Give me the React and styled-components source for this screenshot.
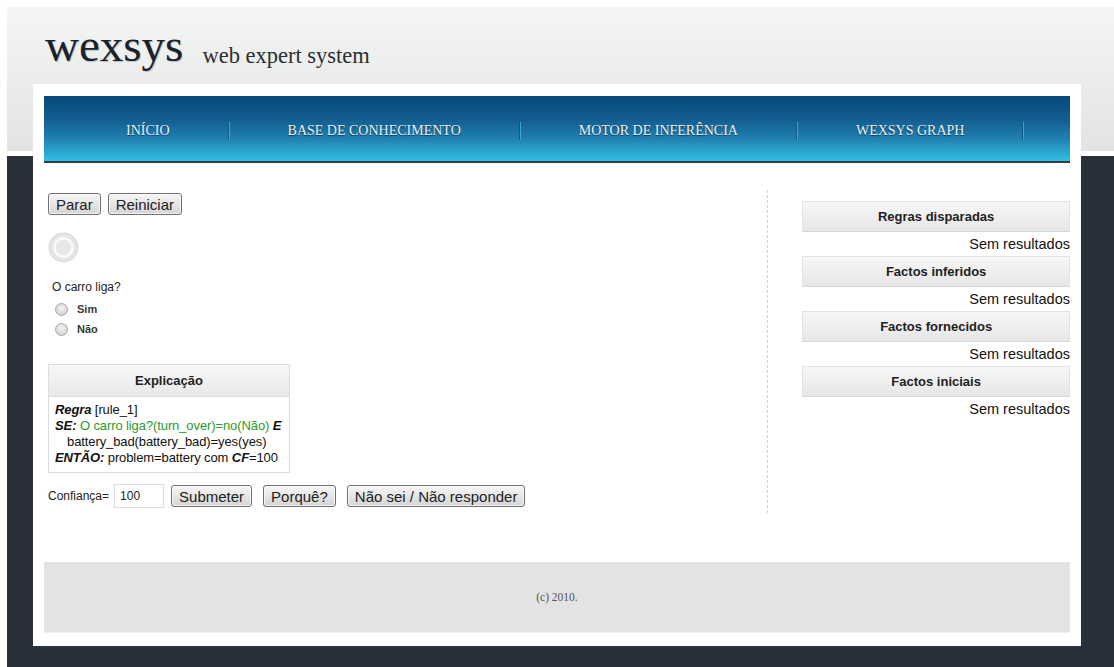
import React from "react";
import styled, { createGlobalStyle } from "styled-components";

const GlobalStyle = createGlobalStyle`
   html, body {
      margin: 0;
      padding: 0;
      background: #fff;
   }
   body {
      padding: 7px 0 0 7px;
      font-family: "Liberation Sans", Arial, sans-serif;
      color: #222;
   }
`;

const navItems = ["Início", "Base de Conhecimento", "Motor de Inferência", "Wexsys Graph"];
const panels = ["Regras disparadas", "Factos inferidos", "Factos fornecidos", "Factos iniciais"];

function Spinner() {
   return (
      <svg width="31" height="31" viewBox="0 0 31 31">
         <defs>
            <radialGradient id="spinOuter" cx="50%" cy="50%" r="50%">
               <stop offset="0%" stopColor="#f2f2f2" />
               <stop offset="80%" stopColor="#e6e6e6" />
               <stop offset="100%" stopColor="#dadada" />
            </radialGradient>
         </defs>
         <circle cx="15.5" cy="15.5" r="15" fill="url(#spinOuter)" />
         <circle cx="15.5" cy="15.5" r="9" fill="#e8e8e8" stroke="#fbfbfb" strokeWidth="2.5" />
      </svg>
   );
}

function App() {
   return (
      <>
         <GlobalStyle />
         <Page>
            <Header>
               <Logo>wexsys</Logo>
               <Tagline>web expert system</Tagline>
            </Header>
            <Container>
               <Nav>
                  {navItems.map((item) => (
                     <React.Fragment key={item}>
                        <NavItem>{item}</NavItem>
                        <NavSep />
                     </React.Fragment>
                  ))}
               </Nav>

               <Main>
                  <LeftCol>
                     <ButtonRow>
                        <Button>Parar</Button>
                        <Button>Reiniciar</Button>
                     </ButtonRow>
                     <SpinnerWrap>
                        <Spinner />
                     </SpinnerWrap>
                     <Question>O carro liga?</Question>
                     <Options>
                        <Option>
                           <Radio />
                           Sim
                        </Option>
                        <Option>
                           <Radio />
                           Não
                        </Option>
                     </Options>

                     <ExplainBox>
                        <BoxHead>Explicação</BoxHead>
                        <ExplainBody>
                           <div>
                              <Key>Regra</Key> [rule_1]
                           </div>
                           <div>
                              <Key>SE:</Key> <Cond>O carro liga?(turn_over)=no(Não)</Cond> <Key>E</Key>
                           </div>
                           <Indent>battery_bad(battery_bad)=yes(yes)</Indent>
                           <div>
                              <Key>ENTÃO:</Key> problem=battery com <Key>CF</Key>=100
                           </div>
                        </ExplainBody>
                     </ExplainBox>

                     <AnswerRow>
                        <Label>Confiança=</Label>
                        <Input defaultValue="100" />
                        <Button $gap={0}>Submeter</Button>
                        <Button $gap={4}>Porquê?</Button>
                        <Button $gap={4}>Não sei / Não responder</Button>
                     </AnswerRow>
                  </LeftCol>

                  <RightCol>
                     {panels.map((title) => (
                        <Panel key={title}>
                           <PanelHead>{title}</PanelHead>
                           <Empty>Sem resultados</Empty>
                        </Panel>
                     ))}
                  </RightCol>
               </Main>

               <Footer>(c) 2010.</Footer>
            </Container>
         </Page>
      </>
   );
}

export default App;

const Page = styled.div`
   min-height: calc(100vh - 7px);
   background: linear-gradient(
      to bottom,
      #f4f5f5 0,
      #e2e3e3 144px,
      #ffffff 144px,
      #ffffff 149px,
      #29303a 149px
   );
   padding-bottom: 22px;
   box-sizing: border-box;
`;

const Header = styled.div`
   height: 77px;
   box-sizing: border-box;
   padding: 15px 0 0 38px;
   font-family: "Liberation Serif", "Times New Roman", serif;
   line-height: 47px;
   white-space: nowrap;
`;

const Logo = styled.h1`
   display: inline;
   margin: 0;
   font-size: 47px;
   font-weight: normal;
   color: #17222d;
   text-shadow: 1px 1px 1px rgba(0, 0, 0, 0.2);
`;

const Tagline = styled.span`
   margin-left: 19px;
   font-size: 22.5px;
   color: #2b2f33;
   vertical-align: -2px;
`;

const Container = styled.div`
   width: 1048px;
   margin-left: 26px;
   background: #fff;
   padding: 12px 11px 13px;
   box-sizing: border-box;
`;

const Nav = styled.nav`
   height: 61px;
   display: flex;
   align-items: center;
   padding: 4px 0 0 24px;
   background: linear-gradient(to bottom, #064a7b 0%, #125d8f 35%, #1f7fb0 65%, #31c0e4 100%);
   border-bottom: 2px solid #373d42;
`;

const NavItem = styled.a`
   padding: 0 58px;
   font-family: "Liberation Serif", "Times New Roman", serif;
   font-size: 14px;
   text-transform: uppercase;
   color: #eaf1f5;
   text-shadow: 0 1px 1px rgba(0, 0, 0, 0.55);
   white-space: nowrap;
   cursor: pointer;
`;

const NavSep = styled.span`
   width: 1px;
   height: 18px;
   background: #3aa6d6;
   border-left: 1px solid #0c5585;
`;

const Main = styled.div`
   display: flex;
   align-items: flex-start;
   padding-top: 27px;
   margin-bottom: 49px;
`;

const LeftCol = styled.div`
   width: 720px;
   padding: 3px 0 5px 4px;
   border-right: 1px dashed #d2d2d2;
   display: flex;
   flex-direction: column;
   align-items: flex-start;
`;

const ButtonRow = styled.div`
   display: flex;
   gap: 7px;
`;

const Button = styled.button`
   margin-left: ${(p) => (p.$gap ? `${p.$gap}px` : "0")};
   height: 22px;
   padding: 0 7px;
   font-family: "Liberation Sans", Arial, sans-serif;
   font-size: 15px;
   color: #222;
   background: linear-gradient(to bottom, #f6f6f6 0%, #e6e6e6 50%, #d4d4d4 100%);
   border: 1px solid #707070;
   border-radius: 3px;
   box-shadow: inset 0 0 0 1px rgba(255, 255, 255, 0.7);
   cursor: pointer;
`;

const SpinnerWrap = styled.div`
   margin-top: 17px;
   height: 31px;
`;

const Question = styled.div`
   margin: 16px 0 0 4px;
   font-size: 12px;
   line-height: 16px;
`;

const Options = styled.div`
   margin: 7px 0 0 7px;
   display: flex;
   flex-direction: column;
   gap: 6px;
`;

const Option = styled.label`
   display: flex;
   align-items: center;
   gap: 9px;
   font-size: 11px;
   font-weight: bold;
   color: #3a3a3a;
   line-height: 14px;
`;

const Radio = styled.span`
   width: 11px;
   height: 11px;
   border-radius: 50%;
   border: 1px solid #a8a8a8;
   background: radial-gradient(circle at 50% 40%, #f4f4f4 0%, #d6d6d6 70%, #c4c4c4 100%);
`;

const ExplainBox = styled.div`
   margin-top: 28px;
   width: 242px;
   border: 1px solid #dcdcdc;
   box-sizing: border-box;
`;

const BoxHead = styled.div`
   height: 31px;
   display: flex;
   align-items: center;
   justify-content: center;
   font-size: 13px;
   font-weight: bold;
   color: #222;
   background: linear-gradient(to bottom, #f7f7f7 0%, #e8e8e8 100%);
   border-bottom: 1px solid #dcdcdc;
`;

const ExplainBody = styled.div`
   padding: 5px 5px 6px 6px;
   font-size: 13px;
   line-height: 16px;
   color: #111;
   white-space: nowrap;
   letter-spacing: -0.1px;
`;

const Key = styled.b`
   font-style: italic;
`;

const Cond = styled.span`
   color: #2c9a2c;
`;

const Indent = styled.div`
   padding-left: 12px;
`;

const AnswerRow = styled.div`
   margin-top: 11px;
   display: flex;
   align-items: center;
   gap: 7px;
`;

const Label = styled.span`
   font-size: 12px;
   margin-right: -2px;
`;

const Input = styled.input`
   width: 50px;
   height: 24px;
   box-sizing: border-box;
   border: 1px solid #dcdcdc;
   padding: 0 5px;
   font-family: "Liberation Sans", Arial, sans-serif;
   font-size: 12px;
   color: #222;
`;

const RightCol = styled.div`
   width: 268px;
   margin: 11px 0 0 34px;
`;

const Panel = styled.section``;

const PanelHead = styled.div`
   height: 29px;
   display: flex;
   align-items: center;
   justify-content: center;
   font-size: 13px;
   font-weight: bold;
   color: #222;
   background: linear-gradient(to bottom, #f7f7f7 0%, #e6e6e6 100%);
   border: 1px solid #e2e2e2;
   border-bottom-color: #d6d6d6;
`;

const Empty = styled.div`
   text-align: right;
   font-size: 14.5px;
   line-height: 24px;
   color: #111;
`;

const Footer = styled.footer`
   height: 70px;
   display: flex;
   align-items: center;
   justify-content: center;
   background: #e3e3e3;
   border-bottom: 1px solid #efefef;
   font-family: "Liberation Serif", "Times New Roman", serif;
   font-size: 11.5px;
   color: #555;
`;
